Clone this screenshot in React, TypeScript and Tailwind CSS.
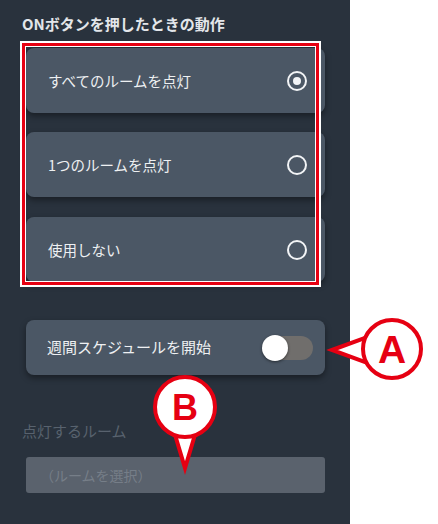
import { useState } from "react";

const options = ["すべてのルームを点灯", "1つのルームを点灯", "使用しない"];

function Radio({ checked }: { checked: boolean }) {
  return (
    <div className="w-[20px] h-[20px] rounded-full border-2 border-[#f2f4f6] flex items-center justify-center">
      {checked && <div className="w-[8px] h-[8px] rounded-full bg-[#f2f4f6]" />}
    </div>
  );
}

function Callouts() {
  return (
    <svg
      className="absolute left-0 top-0 pointer-events-none"
      width="438"
      height="524"
      viewBox="0 0 438 524"
    >
      {/* A */}
      <polygon
        points="332,350 370,336 370,364"
        fill="#fff"
        stroke="#e60012"
        strokeWidth="4"
        strokeLinejoin="miter"
      />
      <circle cx="392" cy="349" r="29" fill="#fff" stroke="#e60012" strokeWidth="4" />
      <text
        x="392"
        y="363"
        textAnchor="middle"
        fontFamily="'Liberation Sans', Arial, sans-serif"
        fontWeight="bold"
        fontSize="39"
        fill="#e60012"
      >
        A
      </text>
      {/* B */}
      <polygon
        points="173,428 197,428 185,468"
        fill="#fff"
        stroke="#e60012"
        strokeWidth="4"
        strokeLinejoin="miter"
      />
      <circle cx="185" cy="407" r="30" fill="#fff" stroke="#e60012" strokeWidth="4" />
      <text
        x="185"
        y="420"
        textAnchor="middle"
        fontFamily="'Liberation Sans', Arial, sans-serif"
        fontWeight="bold"
        fontSize="36"
        fill="#e60012"
      >
        B
      </text>
    </svg>
  );
}

export default function App() {
  const [selected, setSelected] = useState(0);
  const [weekly, setWeekly] = useState(false);

  return (
    <div className="relative w-[438px] h-[524px] bg-white flex font-['Noto_Sans_CJK_JP','Noto_Sans',sans-serif] overflow-hidden">
      <div className="w-[350px] h-full bg-[#29323d] flex flex-col">
        <p className="mt-[14px] ml-[22px] text-[15px] leading-[20px] font-bold text-[#e3e6ea]">
          ONボタンを押したときの動作
        </p>

        {options.map((label, idx) => (
          <button
            key={label}
            onClick={() => setSelected(idx)}
            className={`${idx === 0 ? "mt-[14px]" : idx === 1 ? "mt-[19px]" : "mt-[20px]"} ml-[26px] w-[299px] h-[65px] shrink-0 rounded-[8px] bg-[#4b5765] shadow-[0_3px_6px_rgba(0,0,0,0.4)] flex items-center justify-between pl-[22px] pr-[18px]`}
          >
            <span className="text-[14.5px] text-[#eef0f2]">{label}</span>
            <Radio checked={selected === idx} />
          </button>
        ))}

        <div className="mt-[38px] ml-[26px] w-[299px] h-[55px] shrink-0 rounded-[8px] bg-[#4b5765] shadow-[0_3px_6px_rgba(0,0,0,0.4)] flex items-center justify-between pl-[21px] pr-[12px]">
          <span className="text-[15px] text-[#eef0f2]">週間スケジュールを開始</span>
          <button
            onClick={() => setWeekly(!weekly)}
            className="relative w-[46px] h-[24px] rounded-full bg-[#706e6c]"
          >
            <span
              className={`absolute top-[-1px] w-[26px] h-[26px] rounded-full bg-white shadow-[0_1px_3px_rgba(0,0,0,0.5)] ${weekly ? "left-[25px]" : "left-[-5px]"}`}
            />
          </button>
        </div>

        <p className="mt-[46px] ml-[22px] text-[15px] leading-[20px] text-[#58626e]">
          点灯するルーム
        </p>
        <div className="mt-[16px] ml-[26px] w-[299px] h-[36px] rounded-[3px] bg-[#5a626d] flex items-center pl-[14px]">
          <span className="text-[14px] text-[#767e88]">（ルームを選択）</span>
        </div>
      </div>

      {/* red highlight frame */}
      <div className="absolute left-[20px] top-[41px] w-[301px] h-[246px] border-2 border-white pointer-events-none">
        <div className="w-full h-full border-[3px] border-[#e60012]">
          <div className="w-full h-full border border-white" />
        </div>
      </div>

      <Callouts />
    </div>
  );
}
